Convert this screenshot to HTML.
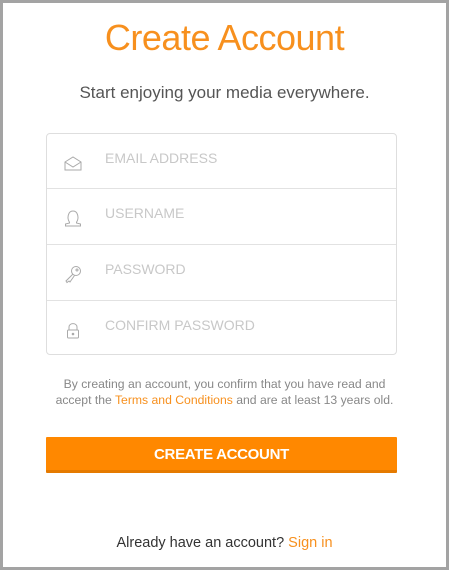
<!DOCTYPE html>
<html><head><meta charset="utf-8"><style>
html,body{margin:0;padding:0}
body{width:449px;height:570px;box-sizing:border-box;border:3px solid #a3a3a3;background:#fff;font-family:"Liberation Sans","DejaVu Sans",sans-serif;position:relative;overflow:hidden}
.t{position:absolute;left:0;width:443px;text-align:center}
h1{position:absolute;top:14px;left:0;width:443px;margin:0;text-align:center;font-weight:normal;font-size:36px;color:#f7901e;letter-spacing:-0.5px}
.box{position:absolute;left:43px;top:130px;width:349px;height:220px;border:1px solid #dedede;border-radius:4px}
.row{height:54px;border-bottom:1px solid #e2e2e2;position:relative}
.row:nth-child(2),.row:nth-child(3){height:55px}
.row:last-child{border-bottom:none}
.row span{position:absolute;left:58px;top:16px;font-size:14px;color:#c8c8c8}
.row svg{position:absolute;left:16px;top:19px}
.btn{position:absolute;left:43px;top:434px;width:351px;height:33px;background:#ff8800;border-bottom:3px solid #e57a00;color:#fff;font-weight:bold;font-size:15px;text-align:center;line-height:36px;border-radius:1px;letter-spacing:-0.3px}
a{color:#f7901e;text-decoration:none}
</style></head><body>
<h1>Create Account</h1>
<div class="t" style="top:80px;font-size:17px;color:#555">Start enjoying your media everywhere.</div>
<div class="box">
<div class="row"><svg width="20" height="20" viewBox="0 0 20 20" fill="none" stroke="#aaa" stroke-width="1"><path d="M2 9 L10 4 L18 9 V17 H2 Z M2 9 L10 14 L18 9"/></svg><span>EMAIL ADDRESS</span></div>
<div class="row"><svg width="20" height="20" viewBox="0 0 20 20" fill="none" stroke="#aaa" stroke-width="1"><path d="M6.5 14 C4 11 4.5 3 10 3 C15.5 3 16 11 13.5 14 M6.5 14 L6.5 15 L2.5 16 V18 H17.5 V16 L13.5 15 V14"/></svg><span>USERNAME</span></div>
<div class="row"><svg width="20" height="20" viewBox="0 0 20 20" fill="none" stroke="#aaa" stroke-width="1"><circle cx="13" cy="7" r="4.5"/><circle cx="14" cy="6" r="1"/><path d="M10 10 L3 17 L4 18.5 L6 17 L7 18 L8 16.5 L11.5 11.5"/></svg><span>PASSWORD</span></div>
<div class="row"><svg width="20" height="20" viewBox="0 0 20 20" fill="none" stroke="#aaa" stroke-width="1"><path d="M6 10 V7 C6 2.5 14 2.5 14 7 V10"/><rect x="4.5" y="10" width="11" height="8" rx="1"/><circle cx="10" cy="14" r="0.8" fill="#aaa"/></svg><span>CONFIRM PASSWORD</span></div>
</div>
<div class="t" style="top:373px;font-size:12.2px;line-height:16px;color:#888">By creating an account, you confirm that you have read and<br>accept the <a>Terms and Conditions</a> and are at least 13 years old.</div>
<div class="btn">CREATE ACCOUNT</div>
<div class="t" style="top:532px;font-size:14.5px;color:#333">Already have an account? <a>Sign in</a></div>
</body></html>
